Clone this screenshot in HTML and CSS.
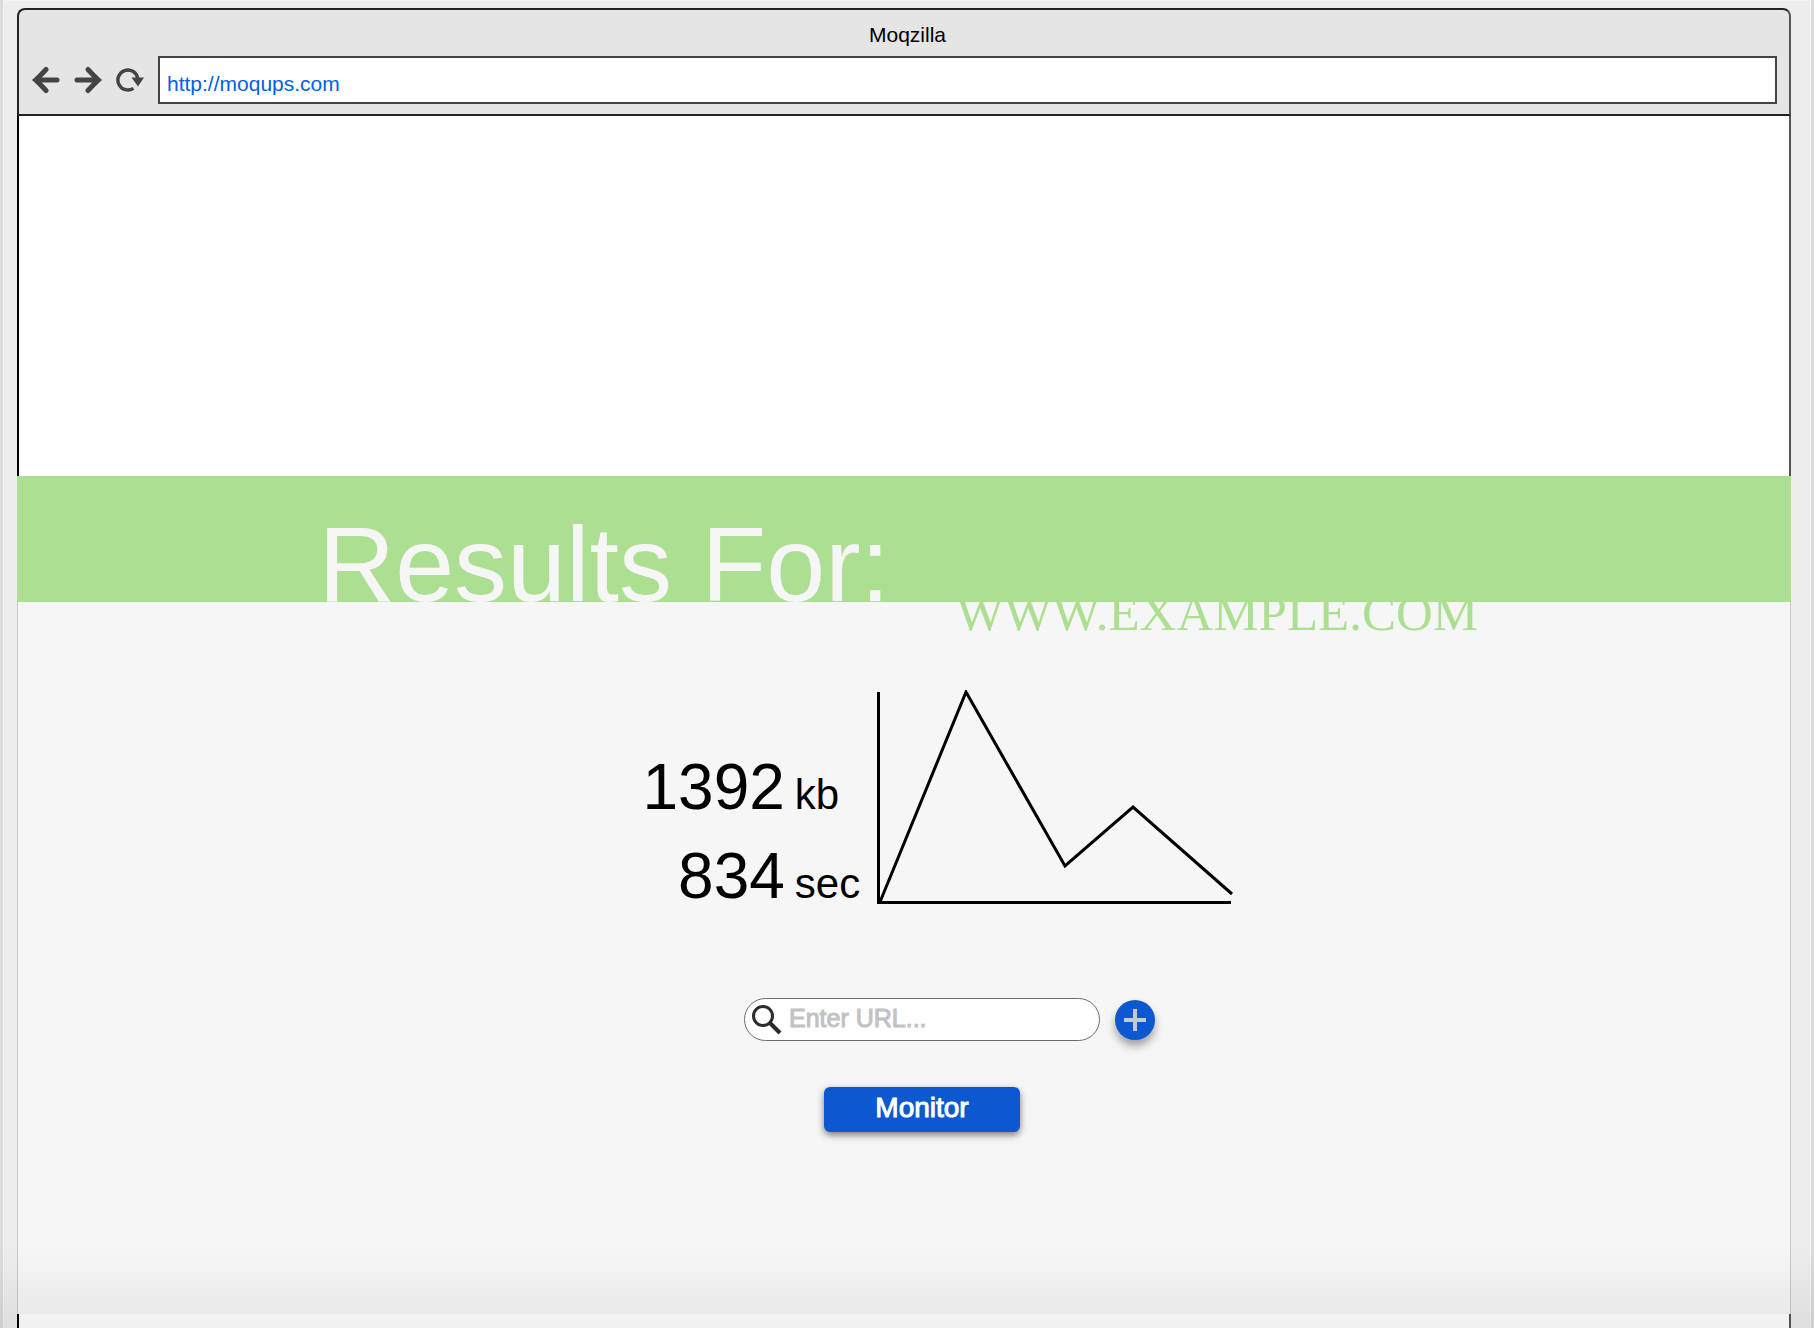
FILE: index.html
```html
<!DOCTYPE html>
<html lang="en">
<head>
<meta charset="utf-8">
<title>Moqzilla</title>
<link rel="stylesheet" href="styles.css">
</head>
<body>
<div class="workspace">
  <div class="browser">
    <header class="chrome">
      <p class="chrome-title">Moqzilla</p>
      <div class="toolbar">
        <button class="nav-button" type="button" aria-label="Back">
          <svg width="28" height="28" viewBox="0 0 28 28" fill="none" stroke="#444" stroke-width="5" stroke-linecap="round"><path d="M14 3.500L4 14l10 10.500M6 14h19"/><path d="M0 14l8-7v14z" fill="#444" stroke="none"/></svg>
        </button>
        <button class="nav-button" type="button" aria-label="Forward">
          <svg width="28" height="28" viewBox="0 0 28 28" fill="none" stroke="#444" stroke-width="5" stroke-linecap="round"><path d="M14 3.500L24 14l-10 10.500M22 14H3"/><path d="M28 14l-8-7v14z" fill="#444" stroke="none"/></svg>
        </button>
        <button class="nav-button" type="button" aria-label="Reload">
          <svg width="28" height="28" viewBox="0 0 28 28" fill="none"><path d="M17.500 22.300A10 10 0 1 1 21.700 12" stroke="#444" stroke-width="3.400"/><path d="M15.500 11.500H28L22 20.500z" fill="#444"/></svg>
        </button>
        <input class="address" type="text" value="http://moqups.com" aria-label="Address">
      </div>
    </header>
    <div class="blank"></div>
    <section class="banner">
      <h1 class="banner-title">Results For:</h1>
      <p class="banner-site">WWW.EXAMPLE.COM</p>
    </section>
    <main class="results">
      <div class="summary">
        <div class="stats">
          <span class="stat-value">1392</span><span class="stat-unit">kb</span>
          <span class="stat-value">834</span><span class="stat-unit">sec</span>
        </div>
        <svg class="chart" width="356" height="214" viewBox="0 0 356 214" fill="none" stroke="#000" stroke-width="3" role="img" aria-label="Load over time">
          <path d="M1.500 2V212.500H354"/>
          <path d="M3 212L89 2L188 176L256 117L355 204"/>
        </svg>
      </div>
      <form class="monitor-form">
        <div class="search">
          <svg width="30" height="30" viewBox="0 0 30 30" fill="none" stroke="#2b2b2b"><circle cx="11" cy="11" r="9.500" stroke-width="3"/><path d="M18 18l10 10" stroke-width="4"/></svg>
          <input class="search-input" type="text" placeholder="Enter URL..." aria-label="URL to monitor">
        </div>
        <button class="add-button" type="button" aria-label="Add URL">
          <svg width="22" height="22" viewBox="0 0 22 22" stroke="#c5c9d0" stroke-width="4"><path d="M11 0v22M0 11h22"/></svg>
        </button>
        <button class="monitor-button" type="button">Monitor</button>
      </form>
    </main>
    <div class="page-end"></div>
  </div>
</div>
</body>
</html>
```

FILE: styles.css
```css
* {
  box-sizing: border-box;
}

body {
  margin: 0;
  background: #dcdcdc;
  color: #000;
  font-family: "Liberation Sans", Arial, sans-serif;
}

/* Soft shade along the lower edge of the window */
body::after {
  content: "";
  position: fixed;
  inset: auto 0 0 0;
  height: 80px;
  background: linear-gradient(rgba(0, 0, 0, 0), rgba(0, 0, 0, 0.06));
  pointer-events: none;
}

h1,
p {
  margin: 0;
  font-weight: normal;
}

.workspace {
  display: flex;
  min-height: 100vh;
  margin: 0 3px;
  padding: 7px 19px 0 13px;
  border: solid #f3f3f3;
  border-width: 1px 1px 0;
  background: #ededed;
}

.browser {
  display: flex;
  flex: 1;
  flex-direction: column;
}

.chrome {
  padding: 13px 12px 10px 13px;
  border: 2px solid #222;
  border-right-color: #555;
  border-radius: 8px 8px 0 0;
  background: #e5e5e5;
}

.chrome-title {
  padding-left: 6px;
  font-size: 21px;
  line-height: 24px;
  text-align: center;
}

.toolbar {
  display: flex;
  align-items: center;
  gap: 14px;
  margin-top: 9px;
}

.nav-button {
  width: 28px;
  height: 28px;
  padding: 0;
  border: 0;
  background: none;
}

.nav-button svg,
.add-button svg {
  display: block;
}

.address {
  flex: 1;
  min-width: 0;
  height: 48px;
  padding: 7px 7px 0;
  border: 2px solid #444;
  border-radius: 0;
  background: #fff;
  color: #0061e6;
  font: 21px "Liberation Sans", Arial, sans-serif;
}

.blank {
  height: 360px;
  border: solid #000;
  border-width: 0 2px;
  border-right-color: #555;
  background: #fff;
}

.banner {
  position: relative;
  z-index: 1;
  display: flex;
  align-items: flex-start;
  gap: 66px;
  height: 126px;
  padding: 34px 0 0 17%;
  background: #addf93;
  white-space: nowrap;
}

.banner-title {
  color: #f6f6f6;
  font-size: 106px;
  line-height: 108px;
}

.banner-site {
  margin-top: 78px;
  color: #addf93;
  font-family: "Liberation Serif", "Times New Roman", serif;
  font-size: 51px;
  line-height: 50px;
}

.results {
  display: flex;
  flex: 1;
  flex-direction: column;
  align-items: center;
  gap: 94px;
  padding: 88px 0;
  border: solid #c8c8c8;
  border-width: 0 1px;
  background: #f6f6f6;
}

.summary {
  display: flex;
  align-items: flex-end;
  gap: 17px;
  padding-left: 66px;
}

.stats {
  display: grid;
  grid-template-columns: 144px auto;
  align-items: baseline;
  gap: 41px 10px;
  line-height: 40px;
}

.stat-value {
  font-size: 64px;
  text-align: right;
}

.stat-unit {
  font-size: 42px;
}

.chart {
  display: block;
}

.monitor-form {
  display: grid;
  grid-template-columns: 356px 40px;
  align-items: center;
  gap: 46px 15px;
  padding-left: 91px;
}

.search {
  display: flex;
  align-items: center;
  gap: 7px;
  height: 43px;
  padding: 0 12px 0 7px;
  border: 1px solid #6b6b6b;
  border-radius: 22px;
  background: #fff;
}

.search-input {
  flex: 1;
  min-width: 0;
  height: 36px;
  padding: 0 0 2px;
  border: 0;
  background: none;
  font: 25px "Liberation Sans", Arial, sans-serif;
}

.search-input::placeholder {
  color: #c2c2c2;
  -webkit-text-stroke: 1px #c2c2c2;
}

.add-button {
  display: grid;
  place-items: center;
  width: 40px;
  height: 40px;
  padding: 0;
  border: 0;
  border-radius: 50%;
  background: #0c58d0;
  box-shadow: 0 6px 8px rgba(0, 0, 0, 0.35);
}

.monitor-button {
  justify-self: center;
  width: 196px;
  height: 45px;
  padding: 0 0 4px;
  border: 0;
  border-radius: 6px;
  background: #0c58d0;
  box-shadow: 0 3px 7px rgba(0, 0, 0, 0.5);
  color: #fff;
  font: 28px "Liberation Sans", Arial, sans-serif;
  -webkit-text-stroke: 1px #fff;
}

.page-end {
  height: 14px;
  border: solid #000;
  border-width: 0 2px;
  border-right-color: #555;
  background: #fff;
}
```
